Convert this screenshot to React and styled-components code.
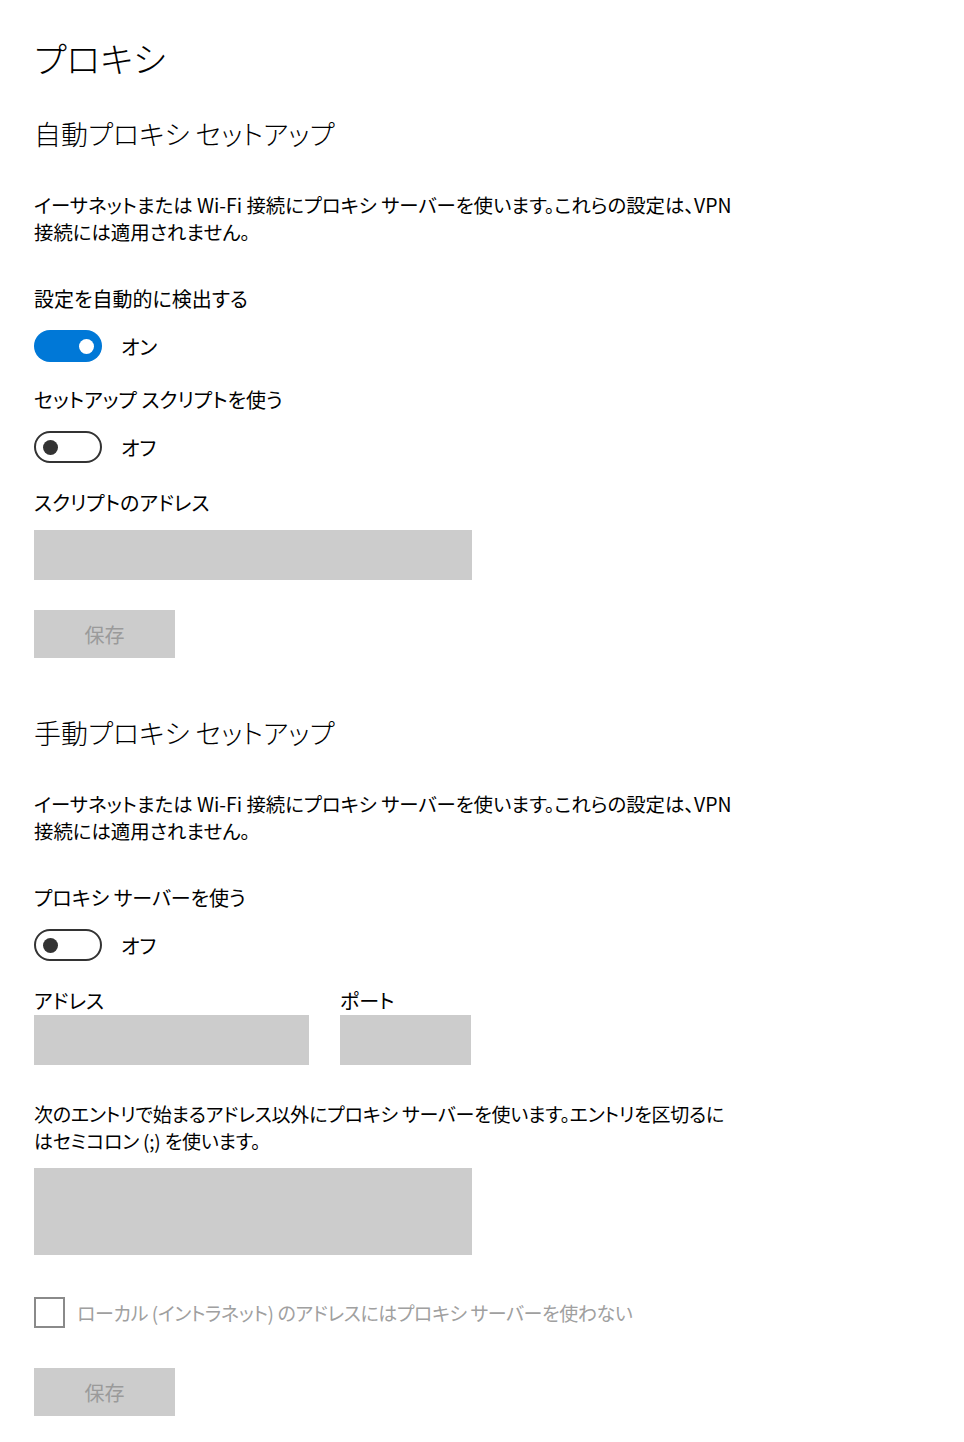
import React from 'react';
import styled, { createGlobalStyle } from 'styled-components';

const GlobalStyle = createGlobalStyle`
  html, body {
    margin: 0;
    padding: 0;
    background: #ffffff;
  }
  body {
    font-family: "Noto Sans CJK JP", "Noto Sans", sans-serif;
    font-feature-settings: "palt";
    color: #000000;
  }
`;

const App = () => {
  return (
    <>
      <GlobalStyle />
      <Page>
        <Title>プロキシ</Title>

        <SectionTitle $mt={37}>自動プロキシ セットアップ</SectionTitle>
        <Description $mt={40}>
          イーサネットまたは Wi-Fi 接続にプロキシ サーバーを使います。これらの設定は、VPN
          <br />
          接続には適用されません。
        </Description>

        <Label $mt={40}>設定を自動的に検出する</Label>
        <ToggleRow>
          <Toggle $on>
            <Knob $on />
          </Toggle>
          <ToggleText>オン</ToggleText>
        </ToggleRow>

        <Label $mt={24}>セットアップ スクリプトを使う</Label>
        <ToggleRow>
          <Toggle>
            <Knob />
          </Toggle>
          <ToggleText>オフ</ToggleText>
        </ToggleRow>

        <Label $mt={26}>スクリプトのアドレス</Label>
        <InputBox $mt={14} $w={438} $h={50} />
        <SaveButton $mt={30}>保存</SaveButton>

        <SectionTitle $mt={58}>手動プロキシ セットアップ</SectionTitle>
        <Description $mt={40}>
          イーサネットまたは Wi-Fi 接続にプロキシ サーバーを使います。これらの設定は、VPN
          <br />
          接続には適用されません。
        </Description>

        <Label $mt={40}>プロキシ サーバーを使う</Label>
        <ToggleRow>
          <Toggle>
            <Knob />
          </Toggle>
          <ToggleText>オフ</ToggleText>
        </ToggleRow>

        <FieldRow>
          <Field>
            <Label>アドレス</Label>
            <InputBox $mt={1} $w={275} $h={50} />
          </Field>
          <Field>
            <Label>ポート</Label>
            <InputBox $mt={1} $w={131} $h={50} />
          </Field>
        </FieldRow>

        <Description $mt={35} $narrow>
          次のエントリで始まるアドレス以外にプロキシ サーバーを使います。エントリを区切るに
          <br />
          はセミコロン (;) を使います。
        </Description>
        <InputBox $mt={14} $w={438} $h={87} />

        <CheckRow>
          <CheckBox />
          <CheckText>ローカル (イントラネット) のアドレスにはプロキシ サーバーを使わない</CheckText>
        </CheckRow>

        <SaveButton $mt={40}>保存</SaveButton>
      </Page>
    </>
  );
};

export default App;

const Page = styled.div`
  display: flex;
  flex-direction: column;
  align-items: flex-start;
  padding: 36px 0 40px 34px;
  width: 964px;
  box-sizing: border-box;
`;

const Title = styled.h1`
  margin: 0;
  font-size: 35px;
  line-height: 44px;
  font-weight: 300;
`;

const SectionTitle = styled.h2`
  margin: ${(p) => p.$mt || 0}px 0 0;
  font-size: 27px;
  line-height: 34px;
  font-weight: 300;
`;

const Description = styled.p`
  margin: ${(p) => p.$mt || 0}px 0 0;
  font-size: ${(p) => (p.$narrow ? 19 : 19.4)}px;
  letter-spacing: ${(p) => (p.$narrow ? '-0.2px' : '0')};
  line-height: 27px;
  white-space: nowrap;
`;

const Label = styled.div`
  margin-top: ${(p) => p.$mt || 0}px;
  font-size: 20px;
  line-height: 27px;
`;

const ToggleRow = styled.div`
  display: flex;
  align-items: center;
  gap: 19px;
  margin-top: 18px;
`;

const Toggle = styled.div`
  width: 68px;
  height: 32px;
  box-sizing: border-box;
  border-radius: 16px;
  display: flex;
  align-items: center;
  justify-content: ${(p) => (p.$on ? 'flex-end' : 'flex-start')};
  padding: 0 ${(p) => (p.$on ? 8 : 7)}px;
  background: ${(p) => (p.$on ? '#0078d7' : '#ffffff')};
  border: ${(p) => (p.$on ? 'none' : '2px solid #333333')};
`;

const Knob = styled.span`
  width: 15px;
  height: 15px;
  border-radius: 50%;
  background: ${(p) => (p.$on ? '#ffffff' : '#333333')};
`;

const ToggleText = styled.span`
  font-size: 20px;
  line-height: 27px;
`;

const InputBox = styled.div`
  margin-top: ${(p) => p.$mt || 0}px;
  width: ${(p) => p.$w}px;
  height: ${(p) => p.$h}px;
  background: #cccccc;
`;

const SaveButton = styled.div`
  margin-top: ${(p) => p.$mt || 0}px;
  width: 141px;
  height: 48px;
  background: #cccccc;
  color: #9a9a9a;
  font-size: 20px;
  display: flex;
  align-items: center;
  justify-content: center;
`;

const FieldRow = styled.div`
  display: flex;
  gap: 31px;
  margin-top: 26px;
`;

const Field = styled.div`
  display: flex;
  flex-direction: column;
`;

const CheckRow = styled.div`
  display: flex;
  align-items: center;
  gap: 12px;
  margin-top: 42px;
`;

const CheckBox = styled.span`
  width: 31px;
  height: 31px;
  box-sizing: border-box;
  border: 2px solid #8a8a8a;
`;

const CheckText = styled.span`
  font-size: 19px;
  letter-spacing: -0.4px;
  line-height: 27px;
  color: #a0a0a0;
`;
